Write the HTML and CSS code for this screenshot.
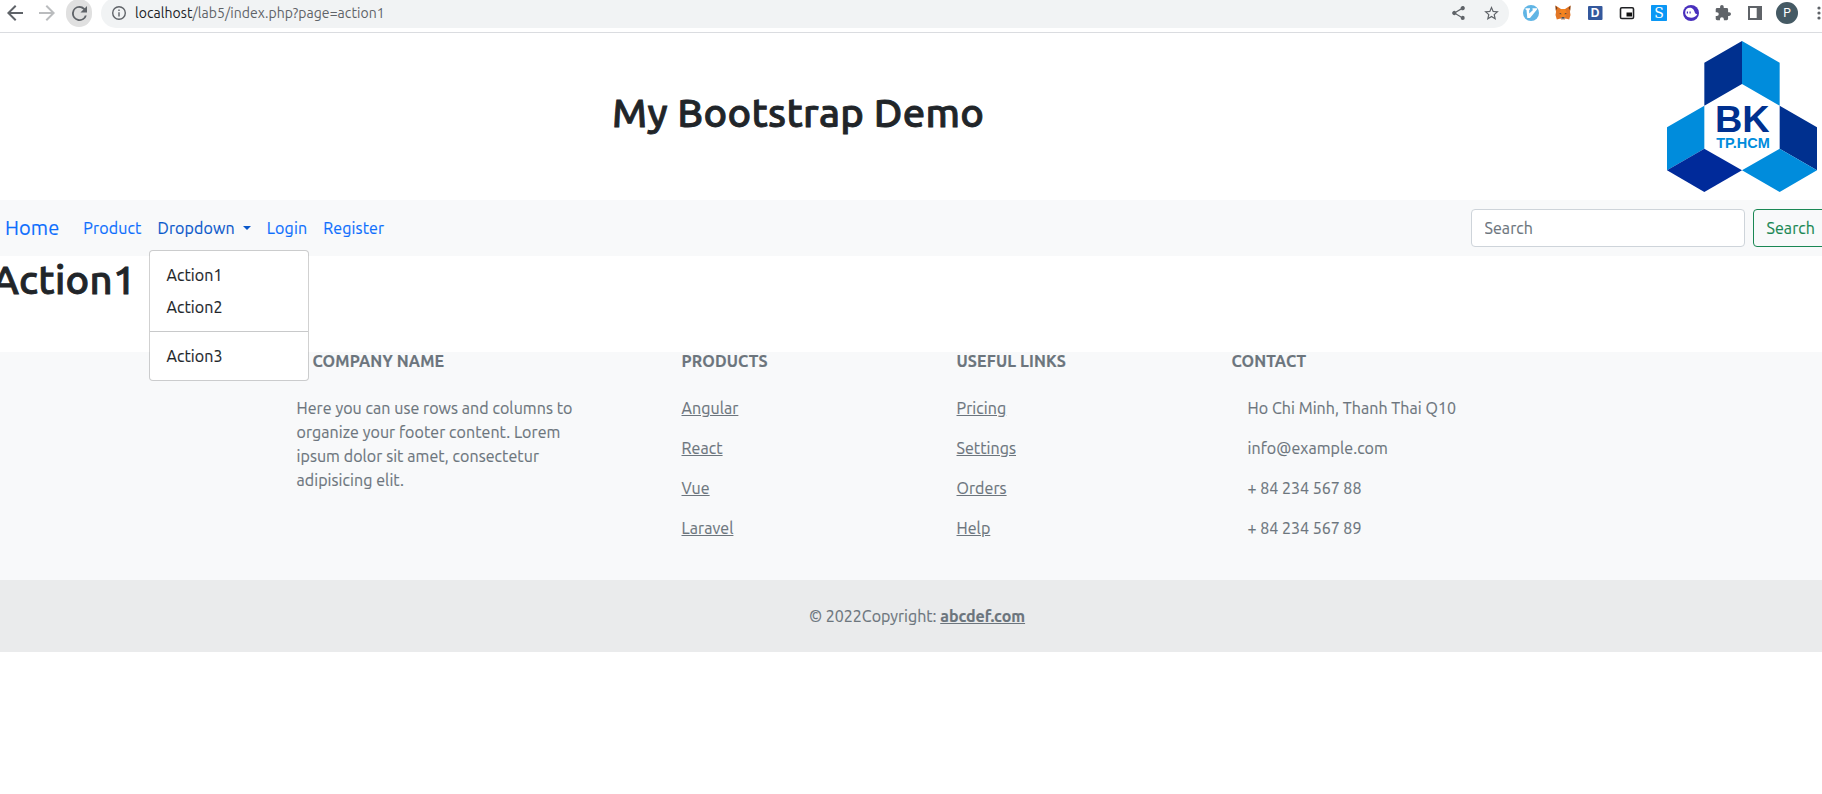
FILE: index.html
```html
<!DOCTYPE html>
<html lang="en">
<head>
<meta charset="utf-8">
<title>My Bootstrap Demo</title>
<link rel="stylesheet" href="styles.css">
</head>
<body>
<div class="toolbar">
  <svg class="ico back" width="16" height="16" viewBox="4 4 16 16"><path fill="#5f6368" d="M20 11H7.83l5.59-5.59L12 4l-8 8 8 8 1.41-1.41L7.83 13H20v-2z"/></svg>
  <svg class="ico forward" width="16" height="16" viewBox="4 4 16 16"><path fill="#babcbe" d="M12 4l-1.41 1.41L16.17 11H4v2h12.17l-5.58 5.59L12 20l8-8z"/></svg>
  <div class="reload"><svg class="ico" width="15" height="15" viewBox="4 4 16 16"><path fill="#5f6368" d="M17.65 6.35A7.96 7.96 0 0 0 12 4a8 8 0 1 0 7.73 10h-2.08A6 6 0 1 1 12 6c1.66 0 3.14.69 4.22 1.78L13 11h7V4l-2.35 2.35z"/></svg></div>
  <div class="omnibox">
    <svg class="ico" width="14" height="14" viewBox="2 2 20 20"><path fill="#5f6368" d="M11 7h2v2h-2zm0 4h2v6h-2zm1-9a10 10 0 1 0 0 20 10 10 0 0 0 0-20zm0 18a8 8 0 1 1 0-16 8 8 0 0 1 0 16z"/></svg>
    <div class="url"><b>localhost</b>/lab5/index.php?page=action1</div>
    <svg class="ico share" width="13" height="14" viewBox="3 2 18 20"><path fill="#5f6368" d="M18 16.1c-.8 0-1.4.3-2 .8l-7.100-4.200a3 3 0 0 0 0-1.400l7-4.100A3 3 0 1 0 15 5l.1.700-7 4.100a3 3 0 1 0 0 4.400l7.100 4.200-.1.600a2.900 2.900 0 1 0 2.900-2.900z"/></svg>
    <svg class="ico" width="15" height="14" viewBox="2 2 20 19"><path fill="#5f6368" d="M22 9.240l-7.190-.62L12 2 9.190 8.630 2 9.240l5.460 4.730L5.820 21 12 17.270 18.180 21l-1.630-7.030L22 9.240zM12 15.400l-3.760 2.270 1-4.280-3.320-2.880 4.380-.38L12 6.100l1.710 4.040 4.380.38-3.320 2.880 1 4.280L12 15.400z"/></svg>
  </div>
  <div class="extensions">
    <svg class="ico" width="16" height="16" viewBox="0 0 16 16"><circle cx="8" cy="8" r="8" fill="#60b5e5"/><path fill="#fff" d="M2.500 3.300h4.500v1.200l-.8.500v3.500L10 5l-.5-.5V3.300h4.500v1.200L7 13H4.300L3.500 5l-1-.5z"/></svg>
    <svg class="ico" width="16" height="16" viewBox="0 0 16 16"><path fill="#e27625" d="M.5.5L6 4h4L15.500.5 15 7l.5 3-1.300 4.500-3.700-1-1.500 1.500H7l-1.500-1.500-3.700 1L.5 10 1 7z"/><path fill="#763e1a" d="M.5.5l.3 5L2.500 3zM15.500.5l-.3 5L13.500 3z"/><path fill="#f5841f" d="M4.500 7L6 4h4l1.500 3-1 5h-5z"/><path fill="#d7c1b3" d="M5.500 13l1.200-.5h2.600l1.200.5L9 15H7z"/><path fill="#233447" d="M4 8.500l2.300 1-.2-1.300zM12 8.500l-2.300 1 .2-1.300zM6.700 12.300h2.600l.3 1.200H6.400z"/></svg>
    <svg class="ico" width="16" height="16" viewBox="0 0 16 16"><rect x="1" y="1" width="14.500" height="14" rx="1" fill="#34589c"/><text class="d-mark" x="8.200" y="12.300">D</text></svg>
    <svg class="ico" width="16" height="16" viewBox="0 0 16 16"><rect x="1.500" y="2.700" width="13" height="10.800" rx="1.300" fill="#fff" stroke="#202124" stroke-width="1.600"/><path fill="#111" d="M7.500 7.500h5.500v4H7.500z"/></svg>
    <svg class="ico" width="16" height="16" viewBox="0 0 16 16"><rect width="16" height="16" rx=".7" fill="#0a97f5"/><text class="s-mark" x="8" y="13">S</text></svg>
    <svg class="ico" width="16" height="16" viewBox="0 0 16 16"><circle cx="8" cy="8" r="8" fill="#4930bd"/><path fill="#fff" d="M2.200 7.500c0-3 2-4.700 4.600-4.700 3.400 0 4.200 2.500 5 4.700.4 1.200 1.200 1.600 2.400 1.700-1 2-3.400 3.500-6 3.500-3.500 0-6-2-6-5.200z"/><path fill="#4930bd" d="M3.800 6.500h1.200v2H3.800zM6.500 6.500h1.200v2H6.500z"/></svg>
    <svg class="ico" width="16" height="16" viewBox="1 1 22 22"><path fill="#5f6368" d="M20.500 11H19V7a2 2 0 0 0-2-2h-4V3.500a2.500 2.500 0 0 0-5 0V5H4a2 2 0 0 0-2 2v3.800h1.500a2.700 2.700 0 0 1 0 5.400H2V20c0 1.100.9 2 2 2h3.800v-1.500a2.700 2.700 0 0 1 5.400 0V22H17a2 2 0 0 0 2-2v-4h1.500a2.500 2.500 0 0 0 0-5z"/></svg>
    <svg class="ico" width="16" height="16" viewBox="0 0 16 16"><path fill="#5f6368" fill-rule="evenodd" d="M1 1h14v14H1zM3 3v10h6.700V3z"/></svg>
    <div class="avatar">P</div>
    <svg class="ico kebab" width="4" height="16" viewBox="0 0 4 16"><g fill="#5f6368"><circle cx="2" cy="3" r="1.600"/><circle cx="2" cy="8" r="1.600"/><circle cx="2" cy="13" r="1.600"/></g></svg>
  </div>
</div>
<div class="page">
  <header class="header">
    <h1 class="title">My Bootstrap Demo</h1>
    <svg class="logo" width="150" height="151" viewBox="51 33 450 453">
      <path fill="#00308f" d="M276 33v129l-113 65V98zM389 227l112 65v129l-112-65z"/>
      <path fill="#008cdc" d="M276 33l113 65v129l-113-65zM163 227v129L51 421V292zM389 356l112 65-112 65-113-65z"/>
      <path fill="#002a9a" d="M163 356l113 65-113 65-112-65z"/>
      <text class="logo-bk" x="277" y="307" textLength="164" lengthAdjust="spacingAndGlyphs">BK</text>
      <text class="logo-city" x="279" y="354" textLength="161" lengthAdjust="spacingAndGlyphs">TP.HCM</text>
    </svg>
  </header>
  <nav class="navbar">
    <a class="brand">Home</a>
    <ul class="nav">
      <li><a class="nav-link">Product</a></li>
      <li class="dropdown">
        <a class="nav-link active">Dropdown<span class="caret"></span></a>
        <div class="menu">
          <a class="item">Action1</a>
          <a class="item">Action2</a>
          <hr class="divider">
          <a class="item">Action3</a>
        </div>
      </li>
      <li><a class="nav-link">Login</a></li>
      <li><a class="nav-link">Register</a></li>
    </ul>
    <form class="search">
      <input class="search-input" type="text" placeholder="Search">
      <button class="search-btn" type="button">Search</button>
    </form>
  </nav>
  <main class="content"><h1>Action1</h1></main>
  <footer class="footer">
    <div class="columns">
      <section class="col wide">
        <h6 class="indent">COMPANY NAME</h6>
        <p>Here you can use rows and columns to organize your footer content. Lorem ipsum dolor sit amet, consectetur adipisicing elit.</p>
      </section>
      <section class="col">
        <h6>PRODUCTS</h6>
        <p><a>Angular</a></p><p><a>React</a></p><p><a>Vue</a></p><p><a>Laravel</a></p>
      </section>
      <section class="col">
        <h6>USEFUL LINKS</h6>
        <p><a>Pricing</a></p><p><a>Settings</a></p><p><a>Orders</a></p><p><a>Help</a></p>
      </section>
      <section class="col wide">
        <h6>CONTACT</h6>
        <p class="indent">Ho Chi Minh, Thanh Thai Q10</p><p class="indent">info@example.com</p><p class="indent phone">+ 84 234 567 88</p><p class="indent phone">+ 84 234 567 89</p>
      </section>
    </div>
    <div class="copyright">© 2022Copyright: <a>abcdef.com</a></div>
  </footer>
</div>
</body>
</html>
```
FILE: styles.css
```css
* { box-sizing: border-box; }
html { overflow: hidden; }
body {
  margin: 0;
  height: 794px;
  overflow: hidden;
  background: #fff;
  color: #212529;
  font: 400 16px/24px Ubuntu, "Noto Sans", sans-serif;
}
h1, h6, p, ul { margin: 0; padding: 0; }
h1 {
  font-size: 40px;
  line-height: 48px;
  font-weight: 500;
  letter-spacing: .27px;
  -webkit-text-stroke: .9px currentColor;
}
.ico { display: block; flex: none; }

/* browser bar */
.toolbar {
  display: flex;
  align-items: flex-start;
  height: 33px;
  border-bottom: 1px solid #dadce0;
}
.back { margin: 5px 0 0 7px; }
.forward { margin: 5px 0 0 16px; }
.reload {
  display: flex;
  align-items: center;
  justify-content: center;
  width: 26px;
  height: 28px;
  margin: -1px 9px 0 11px;
  border-radius: 13px;
  background: #e0e0e0;
}
.omnibox {
  display: flex;
  align-items: center;
  width: 1408px;
  height: 30px;
  margin-top: -2px;
  padding: 0 10px 0 11px;
  border-radius: 15px;
  background: #f1f3f4;
}
.url { flex: 1; margin-left: 9px; font-size: 14px; letter-spacing: .06px; color: #5f6368; }
.url b { font-weight: 400; color: #202124; }
.share { margin-right: 19px; }
.extensions { display: flex; gap: 16px; margin: 5px 0 0 14px; }
.d-mark { font: 700 12px "Liberation Sans", sans-serif; fill: #fff; text-anchor: middle; }
.s-mark { font: 400 14px "DejaVu Serif", serif; fill: #fff; text-anchor: middle; }
.avatar {
  flex: none;
  width: 22px;
  height: 22px;
  margin: -3px 0 0 -3px;
  border-radius: 50%;
  background: #455a64;
  color: #fff;
  font: 400 12px/22px Roboto, sans-serif;
  text-align: center;
}
.kebab { margin-left: 3px; }

/* page */
.page { width: 1850px; margin-left: -8px; }
.header {
  display: flex;
  align-items: flex-start;
  height: 167px;
  padding: 8px 25px 0 620px;
}
.title { margin-top: 48px; }
.logo { display: block; margin-left: auto; }
.logo-bk { font: 700 108px "Liberation Sans", sans-serif; fill: #00308f; text-anchor: middle; }
.logo-city { font: 700 43px "Liberation Sans", sans-serif; fill: #008cdc; text-anchor: middle; }

.navbar,
.footer { -webkit-text-stroke: .15px currentColor; }
.navbar {
  display: flex;
  align-items: center;
  height: 56px;
  padding: 0 14px 0 13px;
  background: #f8f9fa;
}
.brand { margin-right: 16px; font-size: 20px; line-height: 30px; letter-spacing: .1px; color: #0d6efd; }
.nav { display: flex; list-style: none; letter-spacing: .13px; }
.nav-link { display: block; padding: 8px; color: #0d6efd; }
.nav-link.active { color: #0a58ca; }
.caret {
  display: inline-block;
  margin-left: 8px;
  vertical-align: 4px;
  border: 4.8px solid transparent;
  border-top-color: currentColor;
  border-bottom: 0;
}
.dropdown { position: relative; }
.menu {
  position: absolute;
  top: 42px;
  left: 0;
  z-index: 2;
  width: 160px;
  padding: 8px 0;
  border: 1px solid rgba(0, 0, 0, .18);
  border-radius: 4px;
  background: #fff;
  background-clip: padding-box;
}
.item { display: block; padding: 4px 16px; color: #212529; letter-spacing: .07px; }
.divider { height: 0; margin: 8px 0; border: 0; border-top: 1px solid #c8c9ca; }
.search { display: flex; gap: 8px; margin-left: auto; }
.search-input, .search-btn {
  height: 38px;
  padding: 6px 12px 6px 12.6px;
  border: 1px solid #ced4da;
  border-radius: 4px;
  font: inherit;
  letter-spacing: .07px;
}
.search-input { width: 274px; background: #fff; }
.search-input::placeholder { color: #6c757d; opacity: 1; }
.search-btn { border-color: #198754; background: transparent; color: #198754; }
.content { height: 96px; }

/* footer */
.footer { background: #f8f9fa; color: #6c757d; }
.columns {
  display: flex;
  justify-content: space-around;
  width: 1320px;
  height: 228px;
  margin: 0 auto;
  letter-spacing: .07px;
}
.col { width: 220px; padding: 0 12px; }
.wide { width: 330px; }
.col h6 { margin-bottom: 25px; font-size: 16px; line-height: 19px; font-weight: 700; letter-spacing: .14px; }
.col p { margin-bottom: 16px; }
.col .indent { padding-left: 16px; }
.col .phone { letter-spacing: 0; }
.footer a { text-decoration: underline; }
.copyright { padding: 24px; background: #eaebec; text-align: center; }
.copyright a { font-weight: 700; }
```
